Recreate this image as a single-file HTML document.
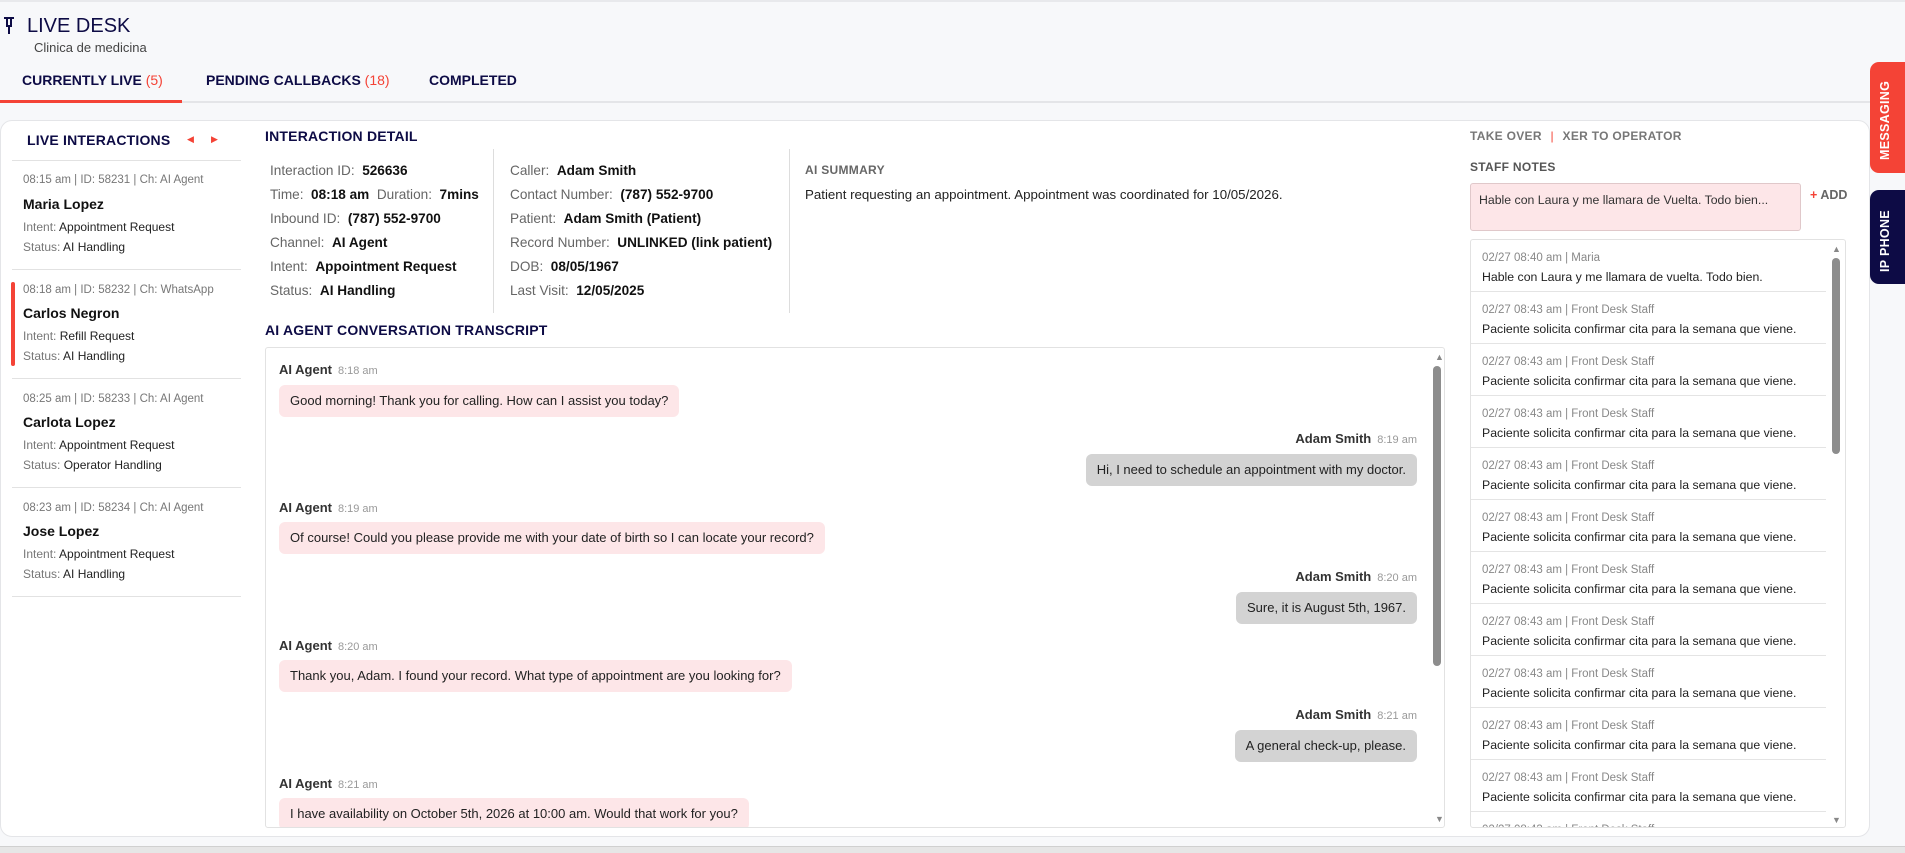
<!DOCTYPE html>
<html><head><meta charset="utf-8">
<style>
*{box-sizing:border-box;margin:0;padding:0}
body{width:1905px;height:853px;overflow:hidden;background:#f7f8fa;font-family:"Liberation Sans",Arial,sans-serif;color:#1a1a1a;position:relative}
.a{position:absolute;white-space:nowrap}
.navy{color:#0d0b45}
.red{color:#f44336}
.h{font-weight:bold;font-size:14px;color:#0d0b45;letter-spacing:.2px}
.lbl{color:#666}
.det{font-size:13.6px}
.det b{color:#111}
.li .m{font-size:11.5px;color:#777}
.li .n{font-size:14px;font-weight:bold;color:#111}
.li .s{font-size:12px;color:#222}
.li .s span{color:#777}
.who{font-size:13px;font-weight:bold;color:#333}
.who small{font-weight:normal;font-size:11px;color:#999;margin-left:6px}
.bub{font-size:13px;color:#222;padding:0 11px;height:32px;line-height:32px;border-radius:6px}
.p{background:#fde6e8}
.g{background:#d3d3d3}
.note{position:absolute;left:0;width:355px;height:52px;border-bottom:1px solid #e4e4e4;padding:12px 0 0 11px}
.note .m{font-size:11.5px;color:#888}
.note .t{font-size:12.3px;color:#222;margin-top:6px}
</style></head><body>
<div style="position:absolute;left:0;top:0;width:1905px;height:2px;background:#e8e9ec"></div>
<div class="a" style="left:4px;top:17px;width:10px;height:2px;background:#0d0b45"></div>
<div class="a" style="left:6px;top:19px;width:6px;height:8px;border:2px solid #0d0b45;border-top:0"></div>
<div class="a" style="left:8px;top:27px;width:2px;height:7px;background:#0d0b45"></div>
<div class="a navy" style="left:27px;top:15px;font-size:20px">LIVE DESK</div>
<div class="a" style="left:34px;top:40px;font-size:13px;color:#444">Clinica de medicina</div>
<div class="a navy" style="left:22px;top:72px;font-size:14px;font-weight:bold">CURRENTLY LIVE <span class="red" style="font-weight:normal">(5)</span></div>
<div class="a navy" style="left:206px;top:72px;font-size:14px;font-weight:bold">PENDING CALLBACKS <span class="red" style="font-weight:normal">(18)</span></div>
<div class="a navy" style="left:429px;top:72px;font-size:14px;font-weight:bold">COMPLETED</div>
<div class="a" style="left:0;top:101px;width:1870px;height:2px;background:#e4e5e8"></div>
<div class="a" style="left:0;top:100px;width:182px;height:3px;background:#f44336"></div>

<div class="a" style="left:0;top:120px;width:1870px;height:717px;background:#fff;border:1px solid #e4e5e8;border-radius:12px"></div>

<!-- left list -->
<div class="a h" style="left:27px;top:132px">LIVE INTERACTIONS</div>
<div class="a red" style="left:187px;top:134px;font-size:9px">&#9664;</div>
<div class="a red" style="left:211px;top:134px;font-size:9px">&#9654;</div>
<div class="a" style="left:12px;top:160px;width:229px;height:1px;background:#e2e2e2"></div>
<div class="li">
<div class="a m" style="left:23px;top:174px">08:15 am | ID: 58231 | Ch: AI Agent</div>
<div class="a n" style="left:23px;top:196px">Maria Lopez</div>
<div class="a s" style="left:23px;top:220px"><span>Intent:</span> Appointment Request</div>
<div class="a s" style="left:23px;top:240px"><span>Status:</span> AI Handling</div>
<div class="a" style="left:12px;top:269px;width:229px;height:1px;background:#e2e2e2"></div>
<div class="a" style="left:11px;top:282px;width:4px;height:84px;background:#f44336;border-radius:2px"></div>
<div class="a m" style="left:23px;top:284px">08:18 am | ID: 58232 | Ch: WhatsApp</div>
<div class="a n" style="left:23px;top:305px">Carlos Negron</div>
<div class="a s" style="left:23px;top:329px"><span>Intent:</span> Refill Request</div>
<div class="a s" style="left:23px;top:349px"><span>Status:</span> AI Handling</div>
<div class="a" style="left:12px;top:378px;width:229px;height:1px;background:#e2e2e2"></div>
<div class="a m" style="left:23px;top:393px">08:25 am | ID: 58233 | Ch: AI Agent</div>
<div class="a n" style="left:23px;top:414px">Carlota Lopez</div>
<div class="a s" style="left:23px;top:438px"><span>Intent:</span> Appointment Request</div>
<div class="a s" style="left:23px;top:458px"><span>Status:</span> Operator Handling</div>
<div class="a" style="left:12px;top:487px;width:229px;height:1px;background:#e2e2e2"></div>
<div class="a m" style="left:23px;top:502px">08:23 am | ID: 58234 | Ch: AI Agent</div>
<div class="a n" style="left:23px;top:523px">Jose Lopez</div>
<div class="a s" style="left:23px;top:547px"><span>Intent:</span> Appointment Request</div>
<div class="a s" style="left:23px;top:567px"><span>Status:</span> AI Handling</div>
<div class="a" style="left:12px;top:596px;width:229px;height:1px;background:#e2e2e2"></div>
</div>

<!-- detail -->
<div class="a h" style="left:265px;top:128px">INTERACTION DETAIL</div>
<div class="det">
<div class="a" style="left:270px;top:163px"><span class="lbl">Interaction ID:</span>&nbsp; <b>526636</b></div>
<div class="a" style="left:270px;top:187px"><span class="lbl">Time:</span>&nbsp; <b>08:18 am</b>&nbsp; <span class="lbl">Duration:</span>&nbsp; <b>7mins</b></div>
<div class="a" style="left:270px;top:211px"><span class="lbl">Inbound ID:</span>&nbsp; <b>(787) 552-9700</b></div>
<div class="a" style="left:270px;top:235px"><span class="lbl">Channel:</span>&nbsp; <b>AI Agent</b></div>
<div class="a" style="left:270px;top:259px"><span class="lbl">Intent:</span>&nbsp; <b>Appointment Request</b></div>
<div class="a" style="left:270px;top:283px"><span class="lbl">Status:</span>&nbsp; <b>AI Handling</b></div>
<div class="a" style="left:493px;top:149px;width:1px;height:164px;background:#ddd"></div>
<div class="a" style="left:510px;top:163px"><span class="lbl">Caller:</span>&nbsp; <b>Adam Smith</b></div>
<div class="a" style="left:510px;top:187px"><span class="lbl">Contact Number:</span>&nbsp; <b>(787) 552-9700</b></div>
<div class="a" style="left:510px;top:211px"><span class="lbl">Patient:</span>&nbsp; <b>Adam Smith (Patient)</b></div>
<div class="a" style="left:510px;top:235px"><span class="lbl">Record Number:</span>&nbsp; <b>UNLINKED (link patient)</b></div>
<div class="a" style="left:510px;top:259px"><span class="lbl">DOB:</span>&nbsp; <b>08/05/1967</b></div>
<div class="a" style="left:510px;top:283px"><span class="lbl">Last Visit:</span>&nbsp; <b>12/05/2025</b></div>
<div class="a" style="left:789px;top:149px;width:1px;height:164px;background:#ddd"></div>
</div>
<div class="a" style="left:805px;top:163px;font-size:12px;color:#666;font-weight:bold;letter-spacing:.3px">AI SUMMARY</div>
<div class="a" style="left:805px;top:187px;font-size:13.3px;color:#222">Patient requesting an appointment. Appointment was coordinated for 10/05/2026.</div>

<!-- transcript -->
<div class="a h" style="left:265px;top:322px">AI AGENT CONVERSATION TRANSCRIPT</div>
<div class="a" style="left:265px;top:347px;width:1180px;height:481px;border:1px solid #e2e2e2;border-radius:3px;overflow:hidden">
 <div class="a" style="left:1169px;top:4px;font-size:9px;color:#888">&#9650;</div>
 <div class="a" style="left:1169px;top:466px;font-size:9px;color:#888">&#9660;</div>
 <div class="a" style="left:1167px;top:18px;width:8px;height:300px;background:#8d8d8d;border-radius:4px"></div>
 <div class="a who" style="left:13px;top:14px">AI Agent<small>8:18 am</small></div>
 <div class="a bub p" style="left:13px;top:37px">Good morning! Thank you for calling. How can I assist you today?</div>
 <div class="a who" style="right:27px;top:83px">Adam Smith<small>8:19 am</small></div>
 <div class="a bub g" style="right:27px;top:106px">Hi, I need to schedule an appointment with my doctor.</div>
 <div class="a who" style="left:13px;top:152px">AI Agent<small>8:19 am</small></div>
 <div class="a bub p" style="left:13px;top:174px">Of course! Could you please provide me with your date of birth so I can locate your record?</div>
 <div class="a who" style="right:27px;top:221px">Adam Smith<small>8:20 am</small></div>
 <div class="a bub g" style="right:27px;top:244px">Sure, it is August 5th, 1967.</div>
 <div class="a who" style="left:13px;top:290px">AI Agent<small>8:20 am</small></div>
 <div class="a bub p" style="left:13px;top:312px">Thank you, Adam. I found your record. What type of appointment are you looking for?</div>
 <div class="a who" style="right:27px;top:359px">Adam Smith<small>8:21 am</small></div>
 <div class="a bub g" style="right:27px;top:382px">A general check-up, please.</div>
 <div class="a who" style="left:13px;top:428px">AI Agent<small>8:21 am</small></div>
 <div class="a bub p" style="left:13px;top:450px">I have availability on October 5th, 2026 at 10:00 am. Would that work for you?</div>
</div>

<!-- right panel -->
<div class="a" style="left:1470px;top:129px;font-size:12px;font-weight:bold;color:#777;letter-spacing:.3px">TAKE OVER <span class="red" style="font-weight:normal;margin:0 5px">|</span> XER TO OPERATOR</div>
<div class="a" style="left:1470px;top:160px;font-size:12px;font-weight:bold;color:#555;letter-spacing:.3px">STAFF NOTES</div>
<div class="a" style="left:1470px;top:183px;width:331px;height:48px;background:#fde6e8;border:1px solid #e0c8ca;border-radius:3px;padding:9px 8px;font-size:12.3px;color:#333">Hable con Laura y me llamara de Vuelta. Todo bien...</div>
<div class="a" style="left:1810px;top:188px;font-size:12.5px;color:#666;font-weight:bold"><span class="red">+</span> ADD</div>
<div class="a" style="left:1470px;top:239px;width:376px;height:589px;border:1px solid #e2e2e2;border-radius:3px;overflow:hidden">
 <div class="a" style="left:361px;top:4px;font-size:9px;color:#888">&#9650;</div>
 <div class="a" style="left:361px;top:575px;font-size:9px;color:#888">&#9660;</div>
 <div class="a" style="left:361px;top:18px;width:8px;height:196px;background:#8d8d8d;border-radius:4px"></div>
 <div class="note" style="top:0"><div class="m">02/27 08:40 am | Maria</div><div class="t">Hable con Laura y me llamara de vuelta. Todo bien.</div></div>
 <div class="note" style="top:52px"><div class="m">02/27 08:43 am | Front Desk Staff</div><div class="t">Paciente solicita confirmar cita para la semana que viene.</div></div>
 <div class="note" style="top:104px"><div class="m">02/27 08:43 am | Front Desk Staff</div><div class="t">Paciente solicita confirmar cita para la semana que viene.</div></div>
 <div class="note" style="top:156px"><div class="m">02/27 08:43 am | Front Desk Staff</div><div class="t">Paciente solicita confirmar cita para la semana que viene.</div></div>
 <div class="note" style="top:208px"><div class="m">02/27 08:43 am | Front Desk Staff</div><div class="t">Paciente solicita confirmar cita para la semana que viene.</div></div>
 <div class="note" style="top:260px"><div class="m">02/27 08:43 am | Front Desk Staff</div><div class="t">Paciente solicita confirmar cita para la semana que viene.</div></div>
 <div class="note" style="top:312px"><div class="m">02/27 08:43 am | Front Desk Staff</div><div class="t">Paciente solicita confirmar cita para la semana que viene.</div></div>
 <div class="note" style="top:364px"><div class="m">02/27 08:43 am | Front Desk Staff</div><div class="t">Paciente solicita confirmar cita para la semana que viene.</div></div>
 <div class="note" style="top:416px"><div class="m">02/27 08:43 am | Front Desk Staff</div><div class="t">Paciente solicita confirmar cita para la semana que viene.</div></div>
 <div class="note" style="top:468px"><div class="m">02/27 08:43 am | Front Desk Staff</div><div class="t">Paciente solicita confirmar cita para la semana que viene.</div></div>
 <div class="note" style="top:520px"><div class="m">02/27 08:43 am | Front Desk Staff</div><div class="t">Paciente solicita confirmar cita para la semana que viene.</div></div>
 <div class="note" style="top:572px"><div class="m">02/27 08:43 am | Front Desk Staff</div><div class="t">Paciente solicita confirmar cita para la semana que viene.</div></div>
</div>

<!-- side tabs -->
<div class="a" style="left:1870px;top:62px;width:40px;height:111px;background:#f44336;border-radius:9px 0 0 9px"></div>
<div class="a" style="left:1878px;top:160px;transform:rotate(-90deg);transform-origin:0 0;color:#fff;font-weight:bold;font-size:12.5px;letter-spacing:.3px">MESSAGING</div>
<div class="a" style="left:1870px;top:190px;width:40px;height:94px;background:#0d0b45;border-radius:9px 0 0 9px"></div>
<div class="a" style="left:1878px;top:272px;transform:rotate(-90deg);transform-origin:0 0;color:#fff;font-weight:bold;font-size:12.5px;letter-spacing:.3px">IP PHONE</div>

<div class="a" style="left:0;top:846px;width:1905px;height:7px;background:#e6e6e6;border-top:1px solid #d0d0d0"></div>
</body></html>
